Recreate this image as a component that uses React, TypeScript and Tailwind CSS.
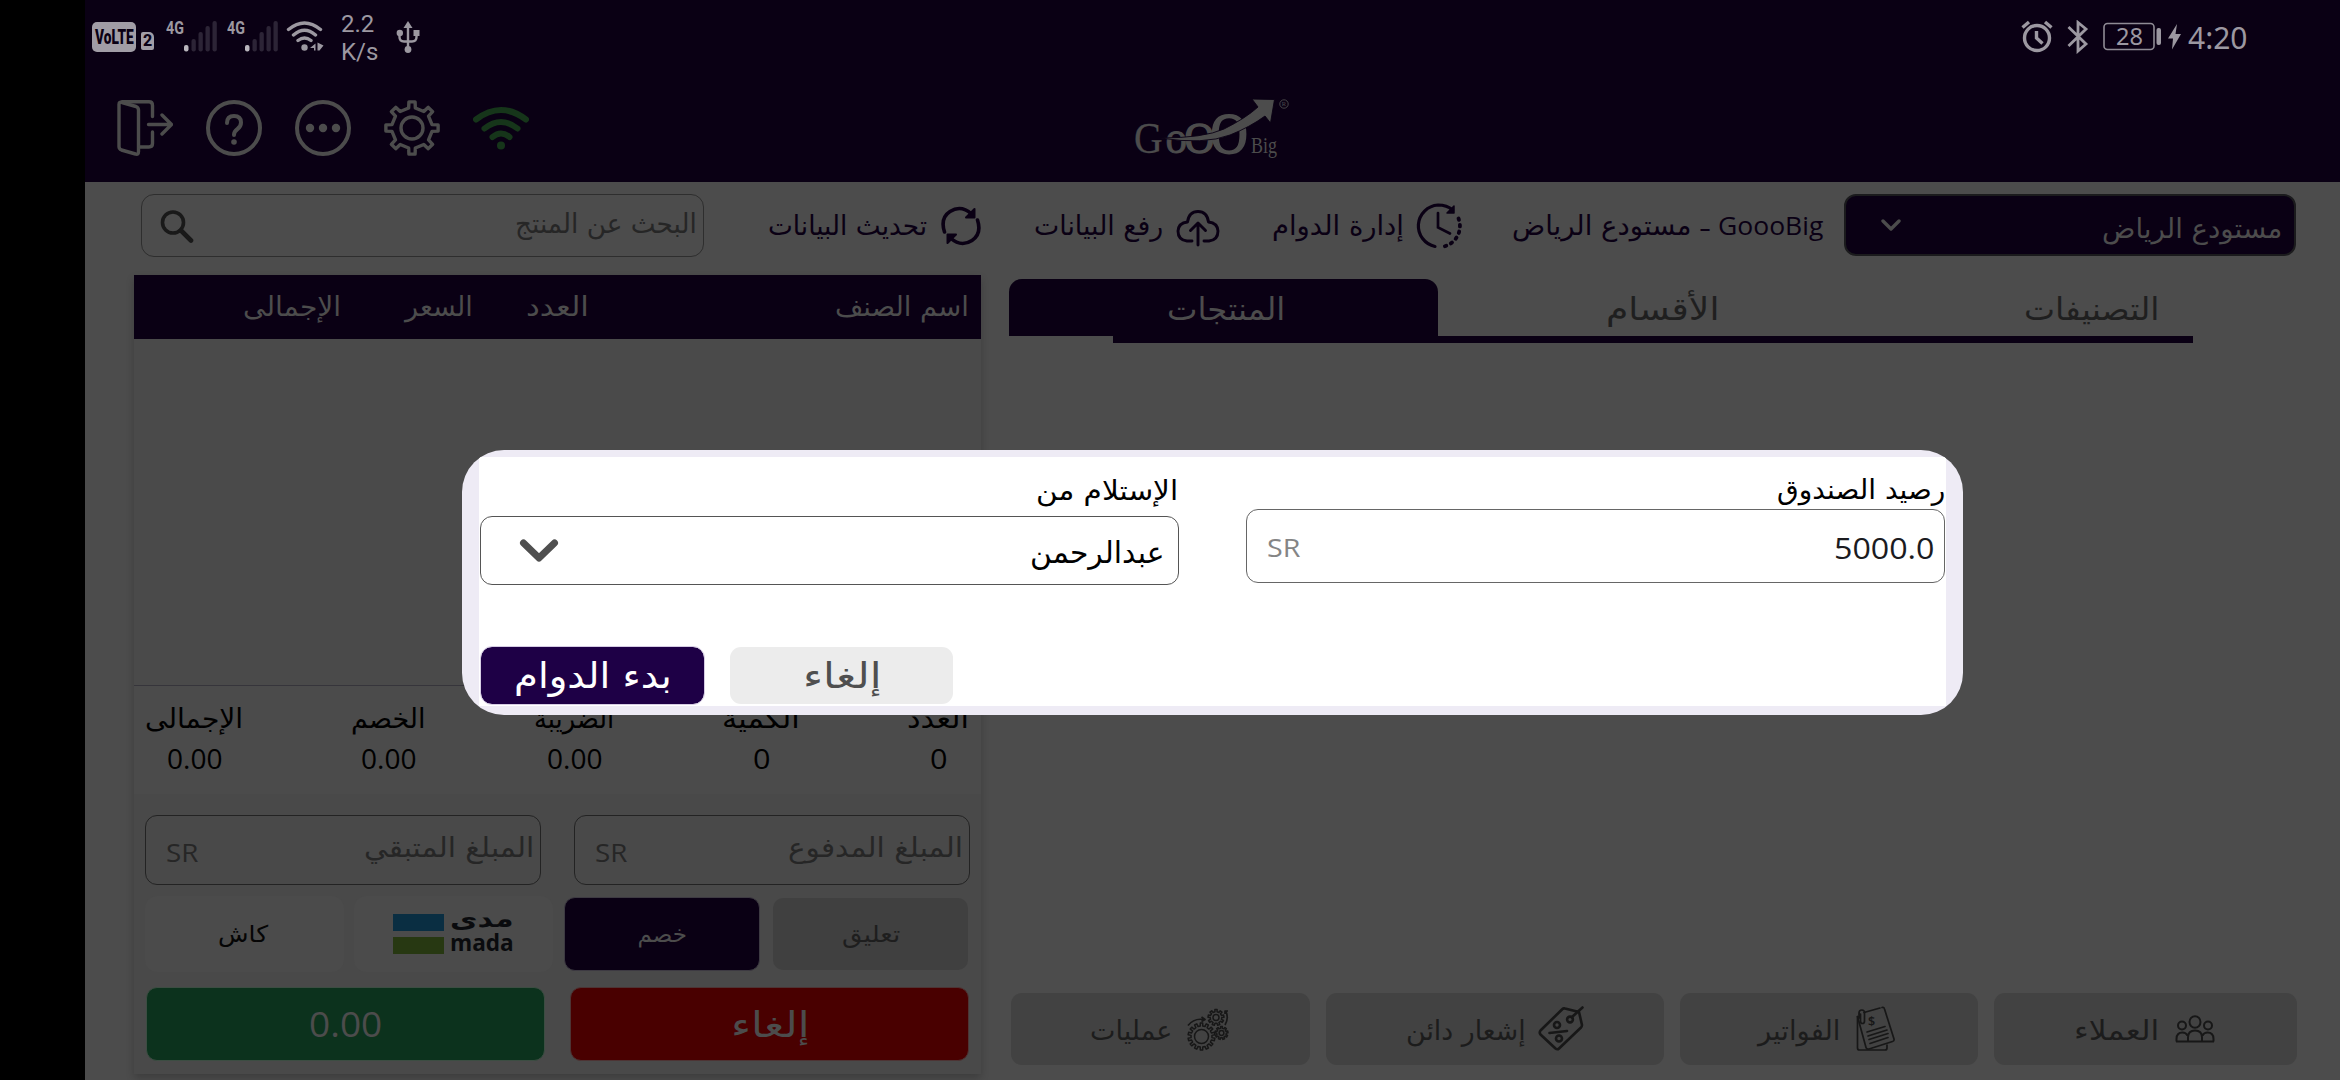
import React, { useLayoutEffect, useRef, useState } from "react";

const AR = "font-['DejaVu_Sans','Noto_Sans',sans-serif]";
const LAT = "font-['Open_Sans','Noto_Sans',sans-serif]";

/* A single line of text condensed or widened to fill exactly `w` pixels. */
function T({ w, children, className = "", latin = false }: { w: number; children: string; className?: string; latin?: boolean }) {
  const ref = useRef<HTMLSpanElement>(null);
  const [s, setS] = useState(1);
  useLayoutEffect(() => {
    if (ref.current) setS(w / ref.current.offsetWidth);
  }, [w, children]);
  return (
    <span className={`block shrink-0 ${latin ? LAT : AR} ${className}`} style={{ width: w }} dir="ltr">
      <span ref={ref} dir={latin ? "ltr" : "rtl"} className="inline-block origin-left whitespace-nowrap" style={{ transform: `scaleX(${s})` }}>
        {children}
      </span>
    </span>
  );
}

function gearPath(cx: number, cy: number, ro: number, ri: number, n: number, top = 0.2, base = 0.3) {
  const step = (Math.PI * 2) / n;
  const pts: string[] = [];
  for (let i = 0; i < n; i++) {
    const a = i * step - Math.PI / 2;
    for (const [r, d] of [[ri, -base], [ro, -top], [ro, top], [ri, base]]) {
      pts.push(`${(cx + r * Math.cos(a + d * step)).toFixed(2)} ${(cy + r * Math.sin(a + d * step)).toFixed(2)}`);
    }
  }
  return "M" + pts.join("L") + "Z";
}

function Signal() {
  return (
    <div className="flex h-8 w-[52px] shrink-0 items-start">
      <T latin w={18} className="!font-[Roboto] mt-[-2px] text-[19px] font-bold leading-[20px]">4G</T>
      <svg width="34" height="32" viewBox="17.500 0 34 32" className="-ml-[0.500px] shrink-0">
        <rect x="17.500" y="25" width="4.500" height="6.500" rx="2" fill="#b9b6bd" />
        <rect x="25" y="19" width="4.300" height="12.500" rx="2" fill="#2c2436" />
        <rect x="32" y="12" width="4.300" height="19.500" rx="2" fill="#2c2436" />
        <rect x="39" y="6" width="4.300" height="25.500" rx="2" fill="#2c2436" />
        <rect x="46" y="1" width="4.300" height="30.500" rx="2" fill="#2c2436" />
      </svg>
    </div>
  );
}

function StatusBar() {
  return (
    <div className="flex h-[72px] items-start pl-[7px] pt-5 text-[#9c98a1]">
      <div className="mt-0.5 flex h-[30px] w-11 shrink-0 items-center justify-center rounded-[5px] bg-[#a19da6] text-[#0a0014]">
        <T latin w={39} className="!font-[Roboto] text-[20px] font-black leading-[28px]">VoLTE</T>
      </div>
      <div className="ml-[5px] mt-3 flex h-[18px] w-[13px] shrink-0 items-center justify-center rounded-[2px] rounded-tr-[5px] bg-[#a19da6] text-[#0a0014]">
        <T latin w={9} className="!font-[Roboto] text-[16px] font-extrabold leading-[18px]">2</T>
      </div>
      <div className="ml-3 flex gap-[9px]"><Signal /><Signal /></div>
      <svg width="38" height="32" viewBox="0 0 38 32" className="ml-[7px] shrink-0" fill="none" stroke="currentColor" strokeWidth="3.400" strokeLinecap="round">
        <path d="M2.500 9.500Q18.500 -3.500 34.500 9.500M7.500 15Q18.500 5.500 29.500 15M12 20.500Q18.500 15.500 25 20.500" />
        <circle cx="18.500" cy="27.500" r="3.200" fill="currentColor" stroke="none" />
        <path d="M29.500 23.500v7h-1.500v-2.500h-4zM31.500 22.500l6 3-4 5h-2z" fill="currentColor" stroke="none" />
      </svg>
      <div className="-mt-2.5 ml-[17px] w-[36px] font-[Roboto] text-[24px] leading-[28px]">
        <div>2.2</div><div>K/s</div>
      </div>
      <svg width="24" height="34" viewBox="0 0 24 34" className="ml-[19px] shrink-0" fill="none" stroke="currentColor" strokeWidth="2.400">
        <path d="M12 5v23M3.500 13v4q0 4.500 4.500 4.500h8q4.500 0 4.500-4.500v-4" />
        <path d="M12 1l4.500 7h-9z" fill="currentColor" stroke="none" />
        <circle cx="3.800" cy="13" r="3.200" fill="currentColor" stroke="none" />
        <rect x="17.500" y="10" width="6" height="6" fill="currentColor" stroke="none" />
        <circle cx="12" cy="29.500" r="3.400" fill="currentColor" stroke="none" />
      </svg>
      <div className="ml-auto mr-[92px] flex items-start">
        <svg width="32" height="33" viewBox="0 0 32 33" fill="none" stroke="currentColor" strokeWidth="3.400">
          <circle cx="16" cy="18" r="12.500" />
          <path d="M15.500 11v7l6 5.500" />
          <path d="M1.500 7.500L8 2M30.500 7.500L24 2" />
        </svg>
        <svg width="22" height="34" viewBox="0 0 22 34" className="ml-[14px]" fill="none" stroke="currentColor" strokeWidth="2.800">
          <path d="M1.500 7l17.500 17-8 7V2.500l8 6.500L1.500 26" />
        </svg>
        <svg width="80" height="34" viewBox="0 0 80 34" className="ml-[14px]">
          <rect x="1" y="3.500" width="50" height="26" rx="3.500" fill="none" stroke="#8f8b95" strokeWidth="1.600" />
          <text x="13" y="25" fontSize="23" fontFamily="Noto Sans" fill="#9c98a1" textLength="27" lengthAdjust="spacingAndGlyphs">28</text>
          <rect x="53.500" y="8" width="4.500" height="17" rx="2" fill="#9c98a1" />
          <path d="M74 4L65 18.500h5L69 29.500l9-15.500h-5.500z" fill="#9c98a1" />
        </svg>
        <T latin w={60} className="ml-[5px] mt-[3px] !font-['Noto_Sans'] text-[31px] leading-[28px]">4:20</T>
      </div>
    </div>
  );
}

function Logo() {
  const f = "Liberation Serif";
  return (
    <svg width="220" height="100" viewBox="0 0 220 100" fill="#4c4c4c" stroke="#4c4c4c" strokeWidth="0">
      <text fontFamily={f} fontSize="45" transform="translate(34 72.500) scale(.88 1)" strokeWidth=".3">G</text>
      <text fontFamily={f} fontSize="47" transform="translate(65.500 72.500) scale(.92 1)" strokeWidth=".9">o</text>
      <text fontFamily={f} fontSize="44" transform="translate(84.500 72.500) scale(.94 1)" strokeWidth="1.500">O</text>
      <text fontFamily={f} fontSize="56" transform="translate(110.500 72.500) scale(.92 1)" strokeWidth="1.800">O</text>
      <path d="M60 58Q104 58 124 49Q146 38 158 27L152 19L174.500 19.500L170.500 43L165 36Q150 47 130 55Q104 65 60 58Z" stroke="#0a0014" strokeWidth=".9" />
      <text fontFamily={f} fontSize="23" x="151" y="72.500" textLength="26" lengthAdjust="spacingAndGlyphs">Big</text>
      <circle cx="184" cy="24" r="4.200" fill="none" strokeWidth=".9" />
      <text fontFamily={f} fontSize="6.500" x="181.800" y="26.200">R</text>
    </svg>
  );
}

function Toolbar() {
  return (
    <div className="relative flex h-[110px] items-start pl-8 pt-7 text-[#4c4c4c]">
      <div className="flex gap-[33px]">
        <svg width="56" height="56" viewBox="0 0 56 56" fill="none" stroke="currentColor" strokeWidth="3.400" strokeLinecap="round" strokeLinejoin="round">
          <path d="M2 4.500Q2 1.500 5 2.500L19 6.500Q21.500 7.500 21.500 10V51.500Q21.500 55 18.500 54L4.500 50Q2 49 2 46.500Z" />
          <path d="M5 1.800H32Q35.500 1.800 35.500 5.500V16.500M35.500 32V43.500Q35.500 47 32 47H22.500M31.500 24.500H54M45 15l9.500 9.500L45 34" />
        </svg>
        <svg width="56" height="56" viewBox="0 0 56 56" fill="none" stroke="currentColor" strokeWidth="4" strokeLinecap="round">
          <circle cx="28" cy="28" r="26" />
          <path d="M21 23q0-7 7-7t7 6.500q0 4-3.500 6.500-3.500 2.500-3.500 6" />
          <circle cx="28" cy="42" r="2.800" fill="currentColor" stroke="none" />
        </svg>
        <svg width="56" height="56" viewBox="0 0 56 56" fill="currentColor">
          <circle cx="28" cy="28" r="26" fill="none" stroke="currentColor" strokeWidth="4" />
          <circle cx="15" cy="28" r="4.200" /><circle cx="28" cy="28" r="4.200" /><circle cx="41" cy="28" r="4.200" />
        </svg>
        <svg width="56" height="56" viewBox="0 0 56 56" fill="none" stroke="currentColor" strokeWidth="3.400" strokeLinejoin="round">
          <path d={gearPath(28, 28, 26.3, 20.3, 8, 0.15, 0.21)} />
          <circle cx="28" cy="28" r="11" />
        </svg>
        <svg width="56" height="56" viewBox="0 0 56 56" fill="none" stroke="#16351a" strokeWidth="6" strokeLinecap="round">
          <path d="M3 19.500Q28 0.500 53 19.500M11.500 28.500Q28 15.500 44.500 28.500M19.500 37Q28 30 36.500 37" />
          <circle cx="28" cy="45.500" r="4" fill="#16351a" stroke="none" />
        </svg>
      </div>
      <div className="-mt-5 ml-[571px]"><Logo /></div>
    </div>
  );
}

function ActionRow() {
  return (
    <div className="flex h-[81px] items-start text-[27px] leading-[64px] text-[#0a0014]">
      <div className="ml-[56px] flex h-[63px] w-[563px] items-center justify-between rounded-[13px] border-[1.500px] border-[#2e2e2e] pl-[18px] pr-[6px] text-[#262626]">
        <svg width="34" height="34" viewBox="0 0 34 34" fill="none" stroke="#191919" strokeLinecap="round">
          <circle cx="13" cy="13.500" r="10.500" strokeWidth="3.600" /><path d="M21 21.500l10 10" strokeWidth="4.600" />
        </svg>
        <T w={182} className="-mt-1">البحث عن المنتج</T>
      </div>
      <T w={159} className="ml-[64px]">تحديث البيانات</T>
      <svg width="40" height="40" viewBox="0 0 40 40" className="ml-[14px] mt-[12px]" fill="none" stroke="currentColor" strokeWidth="3.600" strokeLinecap="round">
        <path d="M3.500 26Q-1 12 9 5.500Q20-1.500 30.500 8M36.500 14Q41 28 31 34.500Q20 41.500 9.500 32" />
        <path d="M33.500 3v8.500H25zM6.500 37v-8.500H15z" fill="currentColor" strokeWidth="2" strokeLinejoin="round" />
      </svg>
      <T w={129} className="ml-[53px]">رفع البيانات</T>
      <svg width="44" height="38" viewBox="0 0 44 38" className="ml-[13px] mt-[15px]" fill="none" stroke="currentColor" strokeWidth="2.900" strokeLinecap="round" strokeLinejoin="round">
        <path d="M16 32H11Q2 31 2 22Q2.500 14 11.500 13Q13 2.500 22 2.500T32.500 13Q41.500 14 42 22Q42 31 33 32H28" />
        <path d="M22 36V14.500M14.500 21.500L22 14L29.500 21.500" />
      </svg>
      <T w={132} className="ml-[52px]">إدارة الدوام</T>
      <svg width="46" height="46" viewBox="0 0 46 46" className="ml-[12px] mt-[9px]" fill="none" stroke="currentColor" strokeWidth="3.200" strokeLinecap="round">
        <path d="M19 43.500A21 21 0 0 1 22 2Q31 2 36.500 7" />
        <path d="M22 10v14.500l12 6" strokeWidth="2.700" />
        <path d="M38 3v7h-7z" fill="currentColor" strokeWidth="1.500" strokeLinejoin="round" />
        <path d="M42.500 15.500A21 21 0 0 1 25 44" strokeDasharray="1.500 5.100" strokeWidth="3.800" />
      </svg>
      <div className="ml-[50px] flex w-[311px] flex-row-reverse justify-between">
        <T latin w={105} className="-mt-px text-[26px]">GoooBig</T>
        <T latin w={12} className="text-[28px]">-</T>
        <T w={179}>مستودع الرياض</T>
      </div>
      <div className="ml-[21px] flex h-[62px] w-[452px] items-center justify-between rounded-[12px] border-2 border-[#1b1b1d] bg-[#0a0014] pl-[35px] pr-3 text-[#4c4c4c]">
        <svg width="20" height="14" viewBox="0 0 20 14" fill="none" stroke="currentColor" strokeWidth="3.400" strokeLinecap="round" strokeLinejoin="round"><path d="M2 3l8 8 8-8" /></svg>
        <T w={180} className="mt-2">مستودع الرياض</T>
      </div>
    </div>
  );
}

function Total({ label, w, value, vw, className }: { label: string; w: number; value: string; vw: number; className: string }) {
  return (
    <div className={`flex flex-col items-center ${className}`}>
      <T w={w} className="text-[27px] leading-[42px]">{label}</T>
      <T latin w={vw} className="text-[27px] leading-[38px]">{value}</T>
    </div>
  );
}

function AmountInput({ w, label }: { w: number; label: string }) {
  return (
    <div className="flex h-[70px] w-[396px] items-center justify-between rounded-[12px] border border-[#232323] pl-[20px] pr-[6px] text-[#262626]">
      <T latin w={32} className="mt-1 text-[26px]">SR</T>
      <T w={w} className="-mt-[3px] text-[27px]">{label}</T>
    </div>
  );
}

function Cart() {
  return (
    <div className="ml-[49px] flex h-[799px] w-[847px] flex-col bg-[#4a4a4a] shadow-[0_4px_8px_rgba(0,0,0,0.2)]">
      <div className="flex h-[64px] shrink-0 bg-[#0a0014] text-[27px] leading-[64px] text-[#4c4c4c]">
        <T w={98} className="ml-[109px]">الإجمالى</T>
        <T w={68} className="ml-[64px]">السعر</T>
        <T w={63} className="ml-[53px]">العدد</T>
        <T w={134} className="ml-[246px]">اسم الصنف</T>
      </div>
      <div className="h-[346px] shrink-0" />
      <div className="flex h-[109px] shrink-0 border-t border-[#36353b] bg-[#4b4b4b] pt-3 text-black">
        <Total label="الإجمالى" w={98} value="0.00" vw={55} className="ml-[11px]" />
        <Total label="الخصم" w={75} value="0.00" vw={55} className="ml-[108px]" />
        <Total label="الضريبة" w={80} value="0.00" vw={55} className="ml-[108px]" />
        <Total label="الكمية" w={78} value="0" vw={17} className="ml-[108px]" />
        <Total label="العدد" w={62} value="0" vw={17} className="ml-[107px]" />
      </div>
      <div className="flex flex-1 flex-col bg-[#494949] pl-[11px] pt-[21px]">
        <div className="flex gap-[33px]">
          <AmountInput w={170} label="المبلغ المتبقي" />
          <AmountInput w={175} label="المبلغ المدفوع" />
        </div>
        <div className="mt-[11px] flex h-[76px] items-center text-[23px]">
          <div className="flex h-[76px] w-[199px] items-center justify-center rounded-[12px] bg-[#4b4b4b] pr-1 text-[#050505]"><T w={50}>كاش</T></div>
          <div className="ml-[10px] flex h-[76px] w-[199px] items-center rounded-[12px] bg-[#4b4b4b] pl-[39px] text-[#0a0b0e]">
            <div className="flex flex-col gap-1.5">
              <div className="h-[17px] w-[51px] bg-[#0a2e42]" />
              <div className="h-[17px] w-[51px] bg-[#273812]" />
            </div>
            <div className="ml-[6px] flex flex-col font-bold">
              <T w={64} className="-mt-1.5 text-[23px] leading-[22px]">مدى</T>
              <T latin w={64} className="text-[24px] leading-[24px]">mada</T>
            </div>
          </div>
          <div className="ml-[11px] flex h-[74px] w-[196px] items-center justify-center rounded-[11px] border border-[#3d3a42] bg-[#0a0014] text-[#4c4c4c]"><T w={49}>خصم</T></div>
          <div className="ml-[13px] flex h-[72px] w-[195px] items-center justify-center rounded-[10px] bg-[#404040] text-[#1e1e1e]"><T w={58}>تعليق</T></div>
        </div>
        <div className="mt-[15px] flex gap-[25px] pl-px text-[#4c4c4c]">
          <div className="flex h-[74px] w-[399px] items-center justify-center rounded-[11px] border border-[#3c4d42] bg-[#0c321d]"><T latin w={73} className="text-[35px] font-medium leading-[70px]">0.00</T></div>
          <div className="flex h-[74px] w-[399px] items-center justify-center rounded-[11px] border border-[#4d3434] bg-[#490000]"><T w={78} className="mt-0.5 text-[35px] leading-[70px]">إلغاء</T></div>
        </div>
      </div>
    </div>
  );
}

const btn = "flex h-[72px] items-center rounded-[11px] bg-[#424242] text-[27px] text-[#1c1c1c]";

function BottomBar() {
  return (
    <div className="mb-[15px] mt-auto flex pl-[2px]">
      <div className={`${btn} w-[299px] pl-[79px]`}>
        <T w={82} className="mt-1">عمليات</T>
        <svg width="42" height="43" viewBox="0 0 42 43" className="ml-[15px]" fill="none" stroke="#171717" strokeWidth="1.500" strokeLinejoin="round">
          <path d={gearPath(14.500, 28.500, 13.500, 10.500, 14, 0.2, 0.26)} /><circle cx="14.500" cy="28.500" r="7" />
          <path d={gearPath(29, 9.500, 8, 5.800, 9, 0.2, 0.26)} /><circle cx="29" cy="9.500" r="3" />
          <path d={gearPath(34.500, 25, 6.500, 4.800, 9, 0.2, 0.26)} /><circle cx="34.500" cy="25" r="2.400" />
          <path d="M1 17.500Q7 10 16.500 11.500M14.500 9l3.500 2.500-3.500 2M38 17Q42 10 39 3.500M38 6V3h3" strokeWidth="1.700" />
        </svg>
      </div>
      <div className={`${btn} ml-4 w-[338px] pl-[80px]`}>
        <T w={120} className="mt-1">إشعار دائن</T>
        <svg width="46" height="46" viewBox="0 0 46 46" className="ml-[12px]" fill="none" stroke="#171717" strokeWidth="2.600" strokeLinejoin="round" strokeLinecap="round">
          <path d="M24.500 3L2.500 24.500Q1 26.500 2.500 28.500L17.500 42.500Q19.500 44 21 42.500L43 21.500Q44 20.500 44 19L41 6L27 2.500Q25.500 2 24.500 3Z" />
          <circle cx="32" cy="13.500" r="2.900" /><path d="M34 11L44.500 1.500M11.500 27L29 25" />
          <circle cx="19" cy="19" r="3" /><circle cx="21" cy="32.500" r="3" />
        </svg>
      </div>
      <div className={`${btn} ml-4 w-[298px] pl-[78px]`}>
        <T w={82} className="mt-1">الفواتير</T>
        <svg width="40" height="46" viewBox="0 0 40 46" className="ml-[16px]" fill="none" stroke="#171717" strokeWidth="1.700" strokeLinejoin="round" strokeLinecap="round">
          <path d="M8 6.500L24 2M26 1.500q2-.5 2.500 1.500L38 33q.5 2-1.500 2.500L13 43q-2.500.5-3-1.500L1.500 10.500" />
          <path d="M1.500 10.500V42q0 2 2 2H29q2 0 2-2v-3M3 12V7q0-3 2.800-3T8.500 7v8q0 2.500-2 2.500t-2-2.500V8" />
          <path d="M11 26l18-5.500M12 30l19-6M13 33.500l19-6M14 37.500l18-6" />
          <text x="12" y="20" fontSize="12.500" fontFamily="Noto Sans" fontWeight="600" fill="#171717" stroke="none">$</text>
        </svg>
      </div>
      <div className={`${btn} ml-4 w-[303px] pl-[80px]`}>
        <T w={85} className="mt-1">العملاء</T>
        <svg width="40" height="28" viewBox="0 0 40 28" className="ml-[16px]" fill="none" stroke="#171717" strokeWidth="2">
          <ellipse cx="20" cy="7" rx="5.500" ry="5.800" /><circle cx="7" cy="10.500" r="4" /><circle cx="33" cy="10.500" r="4" />
          <path d="M1.500 26.500V24q0-6.500 6-6.500 3.500 0 5 3M38.500 26.500V24q0-6.500-6-6.500-3.500 0-5 3M13 26.500V22.500q0-7 7-7t7 7v4M1 26.500h38" />
        </svg>
      </div>
    </div>
  );
}

function Catalog() {
  return (
    <div className="ml-[28px] flex h-[805px] flex-1 flex-col pt-1">
      <div className="flex h-[57px] text-[31px] leading-[60px] text-[#1f1f1f]">
        <div className="flex w-[429px] justify-center rounded-t-[13px] bg-[#0a0014] pl-1 text-[#4c4c4c]"><T w={118} className="text-shadow-none">المنتجات</T></div>
        <T w={113} className="ml-[168px]">الأقسام</T>
        <T w={135} className="ml-[305px]">التصنيفات</T>
      </div>
      <div className="ml-[104px] h-[7px] w-[1080px] bg-[#0a0014]" />
      <BottomBar />
    </div>
  );
}

function ShiftDialog() {
  return (
    <div className="absolute left-[462px] top-[450px] h-[265px] w-[1501px] overflow-hidden rounded-[42px] bg-[#eeebf5] pl-[17px] pt-[7px]">
      <div className="flex h-[249px] w-[1467px] flex-col bg-white pl-px text-black">
        <div className="flex h-[190px]">
          <div className="flex w-[699px] flex-col items-end">
            <T w={142} className="mr-px mt-[9px] text-[27px] leading-[50px]">الإستلام من</T>
            <div className="flex h-[69px] w-[699px] items-center justify-between rounded-[12px] border-[1.500px] border-[#555] pl-[38px] pr-[14px]">
              <svg width="40" height="26" viewBox="0 0 40 26" fill="none" stroke="#4f4f4f" strokeWidth="7" strokeLinecap="round" strokeLinejoin="round"><path d="M4.500 5L20 20 35.500 5" /></svg>
              <T w={134} className="mt-1 text-[30px]">عبدالرحمن</T>
            </div>
          </div>
          <div className="ml-[67px] flex w-[699px] flex-col items-end">
            <T w={168} className="mt-[8px] text-[27px] leading-[50px] -mb-[6px]">رصيد الصندوق</T>
            <div className="flex h-[74px] w-[699px] items-center justify-between rounded-[12px] border border-[#666] pl-[20px] pr-[9px]">
              <T latin w={33} className="mt-[3px] text-[26px] text-[#858585]">SR</T>
              <T latin w={101} className="mt-[3px] text-[29px] text-[#1b1b1f]">5000.0</T>
            </div>
          </div>
        </div>
        <div className="flex gap-[26px] pl-px text-[35px]">
          <div className="flex h-[57px] w-[223px] items-center justify-center rounded-[11px] bg-[#1e0046] text-white outline outline-1 outline-[#d5cce3]"><T w={158} className="mt-px">بدء الدوام</T></div>
          <div className="flex h-[57px] w-[223px] items-center justify-center rounded-[11px] bg-[#ececec] text-[#4f4f4f]"><T w={78} className="mt-px">إلغاء</T></div>
        </div>
      </div>
    </div>
  );
}

export default function App() {
  return (
    <div className="relative flex h-[1080px] w-[2340px] overflow-hidden bg-black pl-[85px]">
      <div className="flex flex-1 flex-col bg-[#4c4c4c]">
        <div className="h-[182px] bg-[#0a0014]">
          <StatusBar />
          <Toolbar />
        </div>
        <div className="flex flex-col pt-3">
          <ActionRow />
          <div className="flex"><Cart /><Catalog /></div>
        </div>
      </div>
      <ShiftDialog />
    </div>
  );
}
